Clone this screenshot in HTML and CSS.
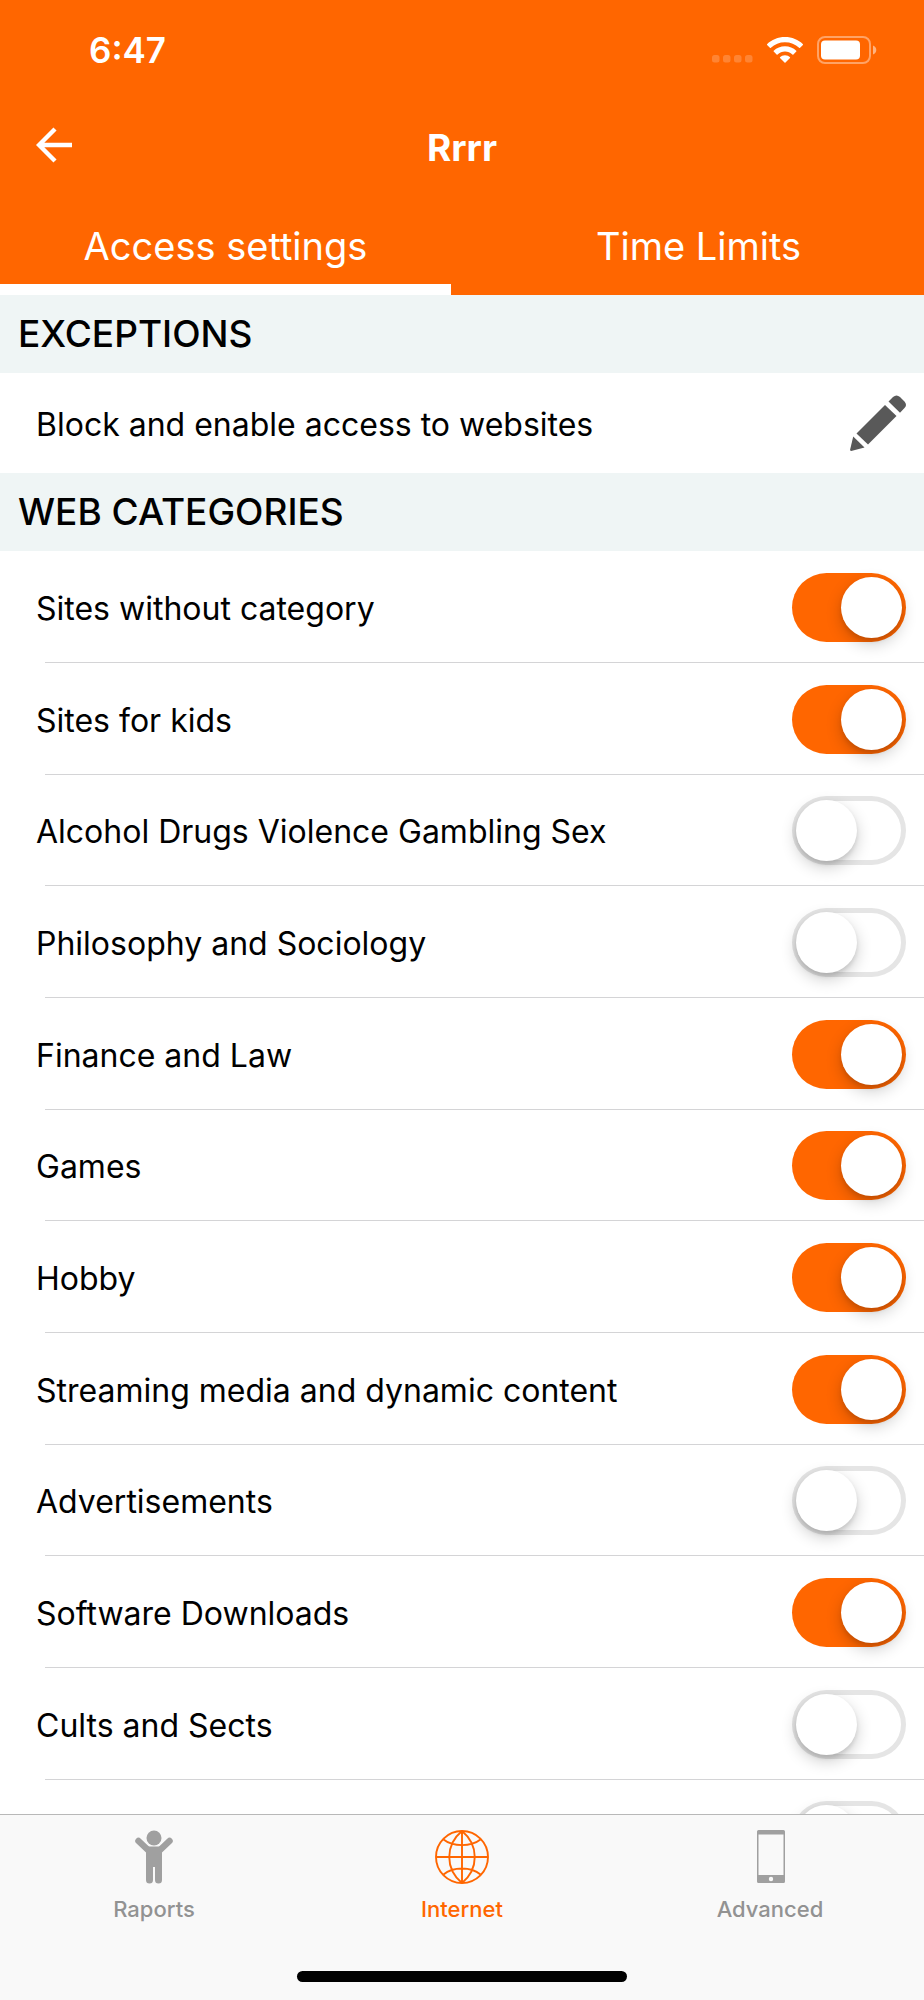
FILE: index.html
```html
<!DOCTYPE html>
<html lang="en">
<head>
<meta charset="utf-8">
<meta name="viewport" content="width=device-width, initial-scale=1">
<title>Rrrr</title>
<link rel="stylesheet" href="styles.css">
</head>
<body>
<div class="app">
  <header class="header">
    <div class="status">
      <time class="status-time">6:47</time>
      <div class="status-icons">
        <svg class="signal" width="42" height="26" viewBox="0 0 42 26" fill="#fff" fill-opacity=".2" aria-hidden="true">
          <rect x="1" y="18" width="7.500" height="7.500" rx="2.500"/><rect x="12" y="18" width="7.500" height="7.500" rx="2.500"/><rect x="23" y="18" width="7.500" height="7.500" rx="2.500"/><rect x="34" y="18" width="7.500" height="7.500" rx="2.500"/>
        </svg>
        <svg class="wifi" width="36" height="26" viewBox="0 0 36 26" fill="#fff" aria-hidden="true">
          <path d="M18 0C11 0 4.600 2.700 0 7.200Q-.2 7.600.1 8L2.900 10.800Q3.400 11.200 3.900 10.800C7.600 7.300 12.500 5.300 18 5.300S28.400 7.300 32.100 10.800Q32.600 11.200 33.100 10.800L35.900 8Q36.200 7.600 36 7.200C31.400 2.700 25 0 18 0Z"/>
          <path d="M18 9.200C13.700 9.200 9.700 10.900 6.700 13.700Q6.300 14.200 6.700 14.600L9.600 17.500Q10.100 17.900 10.600 17.500C12.600 15.700 15.200 14.600 18 14.600S23.400 15.700 25.400 17.500Q25.900 17.900 26.400 17.500L29.300 14.600Q29.700 14.200 29.300 13.700C26.300 10.900 22.300 9.200 18 9.200Z"/>
          <path d="M18 18.200C15.900 18.200 14.200 19 13 20.200Q12.700 20.600 13 21L17.500 25.500Q18 26 18.500 25.500L23 21Q23.300 20.600 23 20.200C21.800 19 20.100 18.200 18 18.200Z"/>
        </svg>
        <svg class="battery" width="60" height="28" viewBox="0 0 60 28" aria-hidden="true">
          <rect x="1" y="1" width="52" height="26" rx="7" fill="none" stroke="#fff" stroke-opacity=".4" stroke-width="2"/>
          <rect x="4" y="4.500" width="39" height="19" rx="4" fill="#fff"/>
          <path d="M56 9.500C58 10.200 59.300 12 59.300 14S58 17.800 56 18.500Z" fill="#fff" fill-opacity=".5"/>
        </svg>
      </div>
    </div>
    <div class="navbar">
      <button class="back" type="button" aria-label="Back">
        <svg width="36" height="36" viewBox="0 0 36 36" fill="none" stroke="#fff" stroke-width="4.400" aria-hidden="true"><path d="M36 18H4M19 2L3 18L19 34"/></svg>
      </button>
      <h1 class="title">Rrrr</h1>
    </div>
    <nav class="tabs" aria-label="Settings">
      <a class="tab tab-active" href="#access" aria-current="page">Access settings</a>
      <a class="tab" href="#limits">Time Limits</a>
    </nav>
  </header>

  <main class="content" id="access">
    <h2 class="section">EXCEPTIONS</h2>
    <button class="exception" type="button">
      <span class="label">Block and enable access to websites</span>
      <svg width="56" height="56" viewBox="0 0 56 56" fill="#595959" aria-hidden="true">
        <path d="M38.500 6.500L43 2Q46.500-1.200 50 2L54.500 6.500Q57.500 10 54.500 13L50 17.800Z"/>
        <path d="M35 10L46.500 21L18 49.500L6.500 38.500Z"/>
        <path d="M3.200 41.500L14.500 52.500L1.200 55.900Q0 56 .1 54.800Z"/>
      </svg>
    </button>
    <h2 class="section">WEB CATEGORIES</h2>
    <ul class="list">
      <li class="row"><label class="label" for="c1">Sites without category</label><input class="switch" type="checkbox" role="switch" id="c1" checked></li>
      <li class="row"><label class="label" for="c2">Sites for kids</label><input class="switch" type="checkbox" role="switch" id="c2" checked></li>
      <li class="row"><label class="label" for="c3">Alcohol Drugs Violence Gambling Sex</label><input class="switch" type="checkbox" role="switch" id="c3"></li>
      <li class="row"><label class="label" for="c4">Philosophy and Sociology</label><input class="switch" type="checkbox" role="switch" id="c4"></li>
      <li class="row"><label class="label" for="c5">Finance and Law</label><input class="switch" type="checkbox" role="switch" id="c5" checked></li>
      <li class="row"><label class="label" for="c6">Games</label><input class="switch" type="checkbox" role="switch" id="c6" checked></li>
      <li class="row"><label class="label" for="c7">Hobby</label><input class="switch" type="checkbox" role="switch" id="c7" checked></li>
      <li class="row"><label class="label" for="c8">Streaming media and dynamic content</label><input class="switch" type="checkbox" role="switch" id="c8" checked></li>
      <li class="row"><label class="label" for="c9">Advertisements</label><input class="switch" type="checkbox" role="switch" id="c9"></li>
      <li class="row"><label class="label" for="c10">Software Downloads</label><input class="switch" type="checkbox" role="switch" id="c10" checked></li>
      <li class="row"><label class="label" for="c11">Cults and Sects</label><input class="switch" type="checkbox" role="switch" id="c11"></li>
      <li class="row row-last"><input class="switch" type="checkbox" role="switch" id="c12" aria-label="Category"></li>
    </ul>
  </main>

  <footer class="footer">
    <nav class="tabbar" aria-label="Main">
      <a class="item" href="#raports">
        <svg width="54" height="54" viewBox="0 0 54 54" fill="#a0a0a0" aria-hidden="true">
          <circle cx="27" cy="8" r="7.500"/>
          <path d="M11.500 11L21 20M42.500 11L33 20" stroke="#a0a0a0" stroke-width="6.500" stroke-linecap="round"/>
          <path d="M19 16.500H35V50Q35 53.500 31.500 53.500T28 50V37H26V50Q26 53.500 22.500 53.500T19 50Z"/>
        </svg>
        <span>Raports</span>
      </a>
      <a class="item item-active" href="#internet" aria-current="page">
        <svg width="54" height="54" viewBox="0 0 54 54" fill="none" stroke="#ff6600" stroke-width="1.900" aria-hidden="true">
          <circle cx="27" cy="27" r="26"/>
          <path d="M27 1V53M1 27H53M27 1C10 15 10 39 27 53M27 1C44 15 44 39 27 53M8.500 9.500C18 17 36 17 45.500 9.500M8.500 44.500C18 36.500 36 36.500 45.500 44.500"/>
        </svg>
        <span>Internet</span>
      </a>
      <a class="item" href="#advanced">
        <svg width="54" height="54" viewBox="0 0 54 54" aria-hidden="true">
          <path fill="#a0a0a0" fill-rule="evenodd" d="M15.500 0H40.500Q42 0 42 1.500V51.500Q42 53 40.500 53H15.500Q14 53 14 51.500V1.500Q14 0 15.500 0ZM15.500 4.500V45H40.500V4.500ZM28 46.800A2.200 2.200 0 1 0 28 51.200A2.200 2.200 0 1 0 28 46.800Z"/>
        </svg>
        <span>Advanced</span>
      </a>
    </nav>
    <div class="home"></div>
  </footer>
</div>
</body>
</html>
```
FILE: styles.css
```css
* { box-sizing: border-box; }

body {
  margin: 0;
  font-family: Inter, "Liberation Sans", sans-serif;
  color: #000;
  background: #fff;
}

a { color: inherit; text-decoration: none; }

button {
  margin: 0;
  padding: 0;
  border: 0;
  background: none;
  font: inherit;
  color: inherit;
  cursor: pointer;
}

.app {
  display: flex;
  flex-direction: column;
  height: 100vh;
}

.header {
  flex: none;
  background: #ff6600;
  color: #fff;
}

.status {
  display: flex;
  align-items: center;
  justify-content: space-between;
  height: 100px;
  padding: 0 47px 0 89px;
}

.status-time { font-size: 35px; font-weight: 600; }

.status-icons { display: flex; align-items: center; gap: 14px; }

.navbar {
  display: grid;
  grid-template-columns: 1fr auto 1fr;
  align-items: center;
  height: 90px;
  padding: 0 36px;
}

.back { justify-self: start; display: flex; }

.title { margin: 0; font-size: 37px; font-weight: 700; line-height: 48px; padding-top: 6px; }

.tabs {
  display: grid;
  grid-template-columns: 1fr 1fr;
  column-gap: 22px;
}

.tab {
  height: 105px;
  border-bottom: 11px solid transparent;
  text-align: center;
  font-size: 38px;
  font-weight: 400;
  line-height: 112px;
}

.tab-active { border-bottom-color: #fff; }

.content {
  flex: 1;
  min-height: 0;
  overflow-y: auto;
  scrollbar-width: none;
}

.section {
  margin: 0;
  padding: 0 18px;
  background: #eff5f5;
  font-size: 37px;
  font-weight: 500;
  line-height: 78px;
}

.exception {
  display: flex;
  align-items: center;
  justify-content: space-between;
  width: 100%;
  height: 100px;
  padding: 0 18px 0 36px;
  font-size: 32px;
  text-align: left;
}

.label { padding-top: 2px; }

.list { margin: 0; padding: 0; list-style: none; }

.row {
  display: flex;
  align-items: center;
  justify-content: space-between;
  height: 112px;
  padding: 0 18px 0 36px;
  font-size: 32px;
  background: linear-gradient(#d4d4d6, #d4d4d6) 45px 100% / 100% 1px no-repeat;
}

.row:nth-child(3n) { height: 111px; }

.row-last { justify-content: flex-end; background: none; }

.switch {
  appearance: none;
  flex: none;
  display: flex;
  align-items: center;
  width: 114px;
  height: 69px;
  margin: 0;
  padding: 0 4px;
  border-radius: 35px;
  background: #fff;
  box-shadow: inset 0 0 0 5px #e5e5e5;
  cursor: pointer;
}

.switch::before {
  content: "";
  width: 61px;
  height: 61px;
  border-radius: 50%;
  background: #fff;
  box-shadow: 0 6px 16px rgba(0, 0, 0, 0.2), 0 3px 4px rgba(0, 0, 0, 0.1);
}

.switch:checked {
  justify-content: flex-end;
  background: #ff6600;
  box-shadow: none;
}

.footer {
  flex: none;
  display: flex;
  flex-direction: column;
  align-items: center;
  justify-content: space-between;
  height: 186px;
  padding-bottom: 18px;
  border-top: 1px solid #b8b8b8;
  background: #f9f9f9;
}

.tabbar {
  display: grid;
  grid-template-columns: 1fr 1fr 1fr;
  width: 100%;
}

.item {
  display: flex;
  flex-direction: column;
  align-items: center;
  gap: 10px;
  padding-top: 15px;
  font-size: 22px;
  font-weight: 500;
  line-height: 30px;
  color: #929292;
}

.item-active { color: #ff6600; }

.home {
  width: 330px;
  height: 11px;
  border-radius: 6px;
  background: #000;
}
```
